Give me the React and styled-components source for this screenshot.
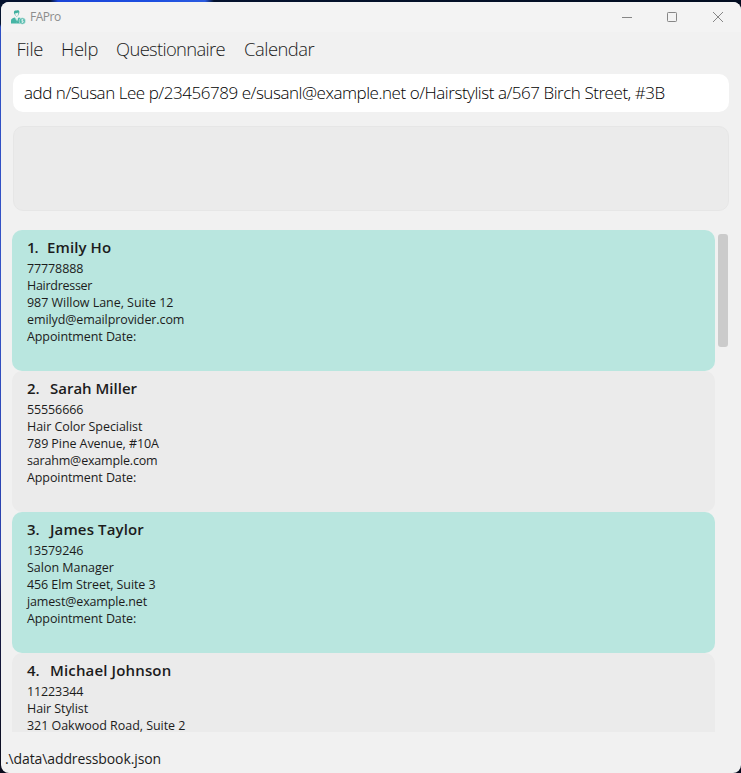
import React from "react";
import styled, { createGlobalStyle } from "styled-components";

const GlobalStyle = createGlobalStyle`
  * { box-sizing: border-box; }
  body { margin: 0; font-family: "Open Sans", "Noto Sans", sans-serif; overflow: hidden; }
`;

const Desktop = styled.div`
  height: 773px;
  width: 741px;
  padding: 2px 0 0 1px;
  background:
    linear-gradient(90deg, #04122e 0 50px, #1a44d8 58px, #1c4ee0 150px, #2a5ae0 205px, #04122e 214px, #020d20 100%) 0 0 / 100% 3px no-repeat,
    linear-gradient(180deg, #06142e 0 24px, #2e4fc4 27px, #3553c6 300px, #2b45b4 480px, #2b3fa8 560px, #191d4a 600px, #0a0c1c 100%) 0 0 / 4px 100% no-repeat,
    #04091c;
`;

const Window = styled.main`
  height: 771px;
  display: flex;
  flex-direction: column;
  background: #f1f1f1;
  border-radius: 8px;
  overflow: hidden;
`;

const TitleBar = styled.header`
  height: 30px;
  flex: none;
  display: flex;
  align-items: center;
  justify-content: space-between;
  padding: 0 17px 0 10px;
  background: #f3f3f3;
`;

const Brand = styled.div`
  display: flex;
  align-items: center;
  gap: 4px;
  font-size: 12px;
  line-height: 18px;
  letter-spacing: -0.5px;
  color: #8c8c8c;
`;

const WindowControls = styled.div`
  display: flex;
  gap: 34px;
  color: #868686;
  svg { display: block; }
  svg:first-child { margin-right: -1px; }
`;

const MenuBar = styled.nav`
  height: 42px;
  flex: none;
  display: flex;
  padding: 4px 0 0 15.6px;
`;

const MenuItem = styled.span`
  width: ${(p) => p.$width}px;
  flex: none;
  font-size: 18.4px;
  font-weight: 300;
  line-height: 26px;
  letter-spacing: ${(p) => p.$tracking}px;
  color: #1c1c1c;
  white-space: nowrap;
`;

const CommandBox = styled.div`
  height: 38px;
  flex: none;
  margin: 0 12px;
  padding: 0 11px;
  border-radius: 10px;
  background: #fff;
  color: #000;
  font-size: 17px;
  font-weight: 300;
  line-height: 37px;
  letter-spacing: -0.455px;
  white-space: nowrap;
`;

const ResultBox = styled.section`
  height: 85px;
  flex: none;
  margin: 14px 12px 0;
  border: 1px solid #e6e6e6;
  border-radius: 10px;
  background: #ebebeb;
`;

const ListArea = styled.section`
  height: 502px;
  flex: none;
  margin: 19px 13px 0 11px;
  display: flex;
  gap: 3px;
  overflow: hidden;
`;

const PersonList = styled.div`
  width: 703px;
  flex: none;
`;

const ScrollThumb = styled.div`
  width: 10px;
  height: 113px;
  margin-top: 4px;
  border-radius: 3px;
  background: #cbcbcb;
`;

const Card = styled.article`
  height: 141px;
  padding: 6px 15px;
  border-radius: 10px;
  background: ${(p) => (p.$tinted ? "#b9e6df" : "#ebebeb")};
  color: #1c1c1c;
`;

const CardTitle = styled.h2`
  margin: 0 0 2px;
  display: flex;
  font-size: 15px;
  font-weight: 600;
  line-height: 22px;
  letter-spacing: ${(p) => p.$tracking}px;
`;

const Ordinal = styled.span`
  width: ${(p) => p.$width}px;
  flex: none;
  letter-spacing: ${(p) => (p.$width < 21 ? -1 : 0)}px;
`;

const Field = styled.p`
  margin: 0;
  font-size: 12.5px;
  line-height: 17px;
  letter-spacing: ${(p) => p.$tracking}px;
  white-space: nowrap;
`;

const StatusBar = styled.footer`
  margin-top: 16px;
  padding-left: 4px;
  font-size: 14px;
  line-height: 21px;
  letter-spacing: -0.11px;
  color: #1c1c1c;
`;

const menus = [
  ["File", 44.5, -0.3],
  ["Help", 55, -0.4],
  ["Questionnaire", 128, -0.67],
  ["Calendar", 80, -0.5],
];

const people = [
  { name: "Emily Ho", tracking: 0.1, fields: [["77778888", -0.12], ["Hairdresser", -0.28], ["987 Willow Lane, Suite 12", -0.04], ["emilyd@emailprovider.com", -0.1], ["Appointment Date:", -0.09]] },
  { name: "Sarah Miller", tracking: 0, fields: [["55556666", -0.12], ["Hair Color Specialist", -0.05], ["789 Pine Avenue, #10A", -0.08], ["sarahm@example.com", -0.18], ["Appointment Date:", -0.09]] },
  { name: "James Taylor", tracking: 0.12, fields: [["13579246", -0.12], ["Salon Manager", -0.02], ["456 Elm Street, Suite 3", -0.09], ["jamest@example.net", -0.15], ["Appointment Date:", -0.09]] },
  { name: "Michael Johnson", tracking: 0.15, fields: [["11223344", -0.12], ["Hair Stylist", -0.08], ["321 Oakwood Road, Suite 2", -0.04]] },
];

const AppIcon = () => (
  <svg width="15" height="15" viewBox="0 0 15 15">
    <path d="M3 3.2C2.6.8 4 .1 5.6.6 7.4-.2 9 .8 8.1 3.4L7.6 4.6H3.8z" fill="#3dae9d" />
    <path d="M4 3.1c1.4.1 2.5-.3 3.3-.9l.2 1.6c-.2 1.6-1 2.6-1.8 2.6S4.2 5.4 4 3.8z" fill="#f3f3f3" stroke="#4fb8a9" strokeWidth=".5" />
    <path d="M0 13.6v-2.8C0 8.8 1.3 8.2 3.8 7.5L5.8 9.2l2-1.7c1.5.4 2.7.8 3.3 1.4v4.7z" fill="#45b5a5" />
    <path d="M4.3 7.8 5.8 13l1.5-5.2-1.5 1z" fill="#e5f5f2" />
    <path d="m5.8 9 .7 2.8-.7 1.3-.7-1.3z" fill="#3dae9d" />
    <circle cx="11.3" cy="11" r="3.2" fill="#54bbad" stroke="#f3f3f3" strokeWidth=".5" />
    <path d="M12.4 9.7c-.6-.5-1.9-.4-1.9.4 0 1 2 .6 2 1.6 0 .8-1.4.9-2.1.3M11.4 9v4" fill="none" stroke="#e9f7f4" strokeWidth=".7" />
  </svg>
);

export default function App() {
  return (
    <>
      <GlobalStyle />
      <Desktop>
        <Window>
          <TitleBar>
            <Brand><AppIcon />FAPro</Brand>
            <WindowControls>
              <svg width="12" height="12" viewBox="0 0 12 12" stroke="currentColor"><path d="M1 6.5h10" /></svg>
              <svg width="12" height="12" viewBox="0 0 12 12" stroke="currentColor" fill="none"><rect x="1.5" y="1.5" width="9" height="9" rx=".8" /></svg>
              <svg width="12" height="12" viewBox="0 0 12 12" stroke="currentColor"><path d="m1 1 10 10M11 1 1 11" /></svg>
            </WindowControls>
          </TitleBar>
          <MenuBar>
            {menus.map(([label, width, tracking]) => (
              <MenuItem key={label} $width={width} $tracking={tracking}>{label}</MenuItem>
            ))}
          </MenuBar>
          <CommandBox>add n/Susan Lee p/23456789 e/susanl@example.net o/Hairstylist a/567 Birch Street, #3B</CommandBox>
          <ResultBox />
          <ListArea>
            <PersonList>
              {people.map((p, i) => (
                <Card key={p.name} $tinted={i % 2 === 0}>
                  <CardTitle $tracking={p.tracking}>
                    <Ordinal $width={i === 0 ? 20 : 23}>{i + 1}.</Ordinal>
                    {p.name}
                  </CardTitle>
                  {p.fields.map(([text, tracking]) => (
                    <Field key={text} $tracking={tracking}>{text}</Field>
                  ))}
                </Card>
              ))}
            </PersonList>
            <ScrollThumb />
          </ListArea>
          <StatusBar>.\data\addressbook.json</StatusBar>
        </Window>
      </Desktop>
    </>
  );
}
